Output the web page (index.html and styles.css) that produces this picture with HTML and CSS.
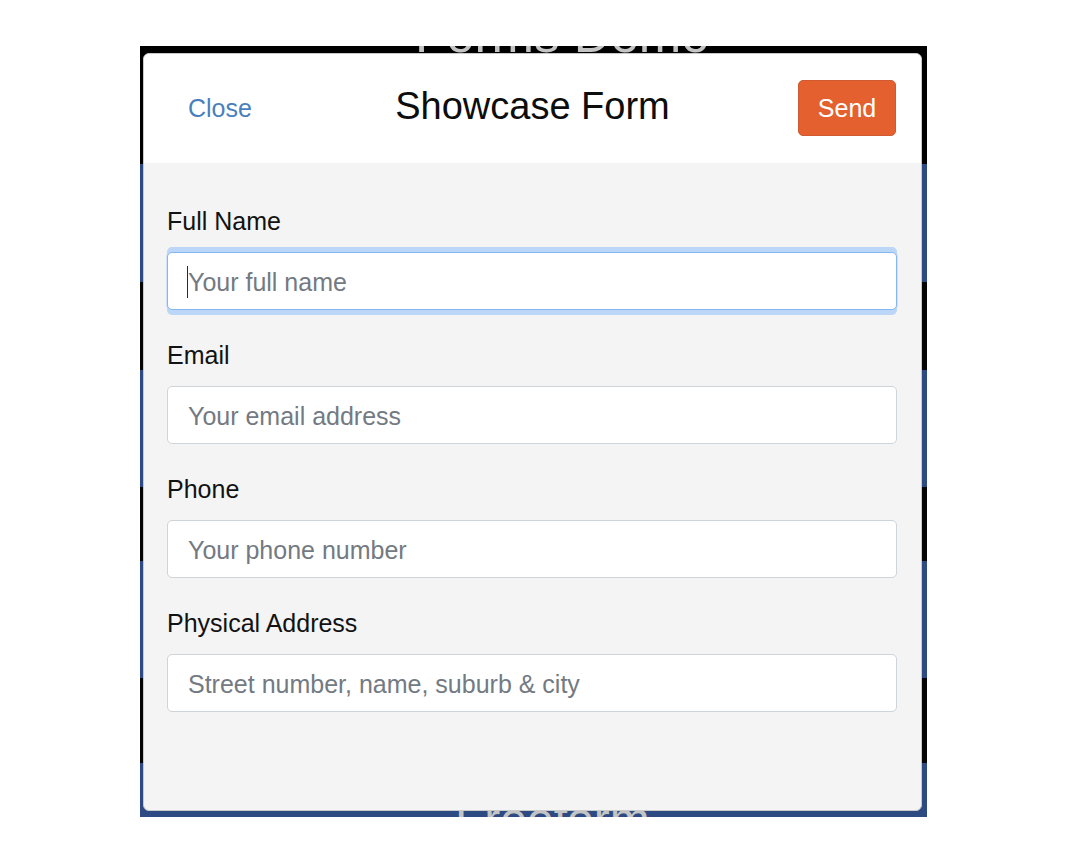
FILE: index.html
```html
<!DOCTYPE html>
<html lang="en">
<head>
<meta charset="utf-8">
<title>Showcase Form</title>
<link rel="stylesheet" href="styles.css">
</head>
<body>
<div class="stage">
  <div class="app">
    <div class="band band-head"><div class="bg-title">Forms Demo</div></div>
    <div class="band blue h118"></div>
    <div class="band dark h88"></div>
    <div class="band blue h117"></div>
    <div class="band dark h74"></div>
    <div class="band blue h117"></div>
    <div class="band dark h85"></div>
    <div class="band blue last"><div class="bg-sub">Freeform</div></div>
  </div>

  <div class="modal">
    <header class="modal-header">
      <a class="btn-close" href="#">Close</a>
      <h1 class="modal-title">Showcase Form</h1>
      <button class="btn-send" type="button">Send</button>
    </header>
    <form class="modal-body">
      <div class="group">
        <label class="label" for="name">Full Name</label>
        <span class="field is-focused"><input class="input" id="name" type="text" placeholder="Your full name"></span>
      </div>
      <div class="group">
        <label class="label" for="email">Email</label>
        <span class="field"><input class="input" id="email" type="email" placeholder="Your email address"></span>
      </div>
      <div class="group">
        <label class="label" for="phone">Phone</label>
        <span class="field"><input class="input" id="phone" type="tel" placeholder="Your phone number"></span>
      </div>
      <div class="group">
        <label class="label" for="addr">Physical Address</label>
        <span class="field"><input class="input" id="addr" type="text" placeholder="Street number, name, suburb &amp; city"></span>
      </div>
    </form>
  </div>
</div>
</body>
</html>
```

FILE: styles.css
```css
* { box-sizing: border-box; }

html, body {
  margin: 0;
  padding: 0;
  background: #ffffff;
  font-family: "Liberation Sans", Arial, sans-serif;
}

.stage {
  position: relative;
  margin: 46px 0 0 140px;
  width: 787px;
  height: 771px;
  overflow: hidden;
  background: #000;
}

.app {
  display: flex;
  flex-direction: column;
  height: 100%;
}

.band { flex: none; }
.band-head { height: 118px; background: #000; }
.blue { background: #2d4b82; }
.dark { background: #050505; }
.h118 { height: 118px; }
.h88 { height: 88px; }
.h117 { height: 117px; }
.h74 { height: 74px; }
.h85 { height: 85px; }
.last { flex: 1; }

.bg-title {
  margin-top: -37px;
  padding-left: 275px;
  font-size: 51px;
  line-height: 51px;
  color: #c4c4c4;
  font-weight: 300;
  white-space: nowrap;
}

.bg-sub {
  margin-top: 33px;
  padding-left: 315px;
  font-size: 48px;
  line-height: 48px;
  color: #c4c4c4;
  white-space: nowrap;
}

.modal {
  position: absolute;
  left: 3px;
  top: 7px;
  width: 779px;
  height: 758px;
  border: 1px solid #c9c9c9;
  border-radius: 6px;
  overflow: hidden;
  background: #f4f4f4;
  display: flex;
  flex-direction: column;
}

.modal-header {
  flex: none;
  height: 109px;
  background: #fff;
  display: grid;
  grid-template-columns: 1fr auto 1fr;
  align-items: center;
  padding: 0 24px 0 24px;
}

.btn-close {
  justify-self: start;
  padding: 0 20px;
  font-size: 25px;
  color: #4a7fbe;
  text-decoration: none;
}

.modal-title {
  margin: 0;
  font-size: 38px;
  font-weight: normal;
  color: #0d0d0d;
  transform: translateY(-2px);
}

.btn-send {
  justify-self: end;
  width: 98px;
  height: 56px;
  margin-right: 1px;
  margin-top: -1px;
  background: #e5602f;
  border: 1px solid #cf5a31;
  border-radius: 5px;
  color: #fff;
  font-family: "Liberation Sans", Arial, sans-serif;
  font-size: 25px;
  padding: 0;
}

.modal-body {
  flex: 1;
  margin: 0;
  padding: 40px 24px 0 23px;
}

.group { margin-bottom: 27px; }

.label {
  display: block;
  font-size: 25px;
  line-height: 36px;
  color: #121212;
  margin-bottom: 13px;
}

.field {
  position: relative;
  display: block;
}

.input {
  display: block;
  width: 100%;
  height: 58px;
  margin: 0;
  padding: 2px 20px 0;
  border: 1px solid #cfd4d9;
  border-radius: 5px;
  background: #fff;
  font-family: "Liberation Sans", Arial, sans-serif;
  font-size: 25px;
  color: #222;
  outline: none;
}

.input::placeholder { color: #737a82; opacity: 1; }

.is-focused .input {
  border-color: #86b7f5;
  box-shadow: 0 -5px 0 0 #bcd6f8, 0 5px 0 0 #bcd6f8, 0 0 0 1px #cfe1f9;
}

.is-focused::before {
  content: "";
  position: absolute;
  left: 20px;
  top: 14px;
  width: 1px;
  height: 32px;
  background: #2a2a2a;
  z-index: 1;
}
```
